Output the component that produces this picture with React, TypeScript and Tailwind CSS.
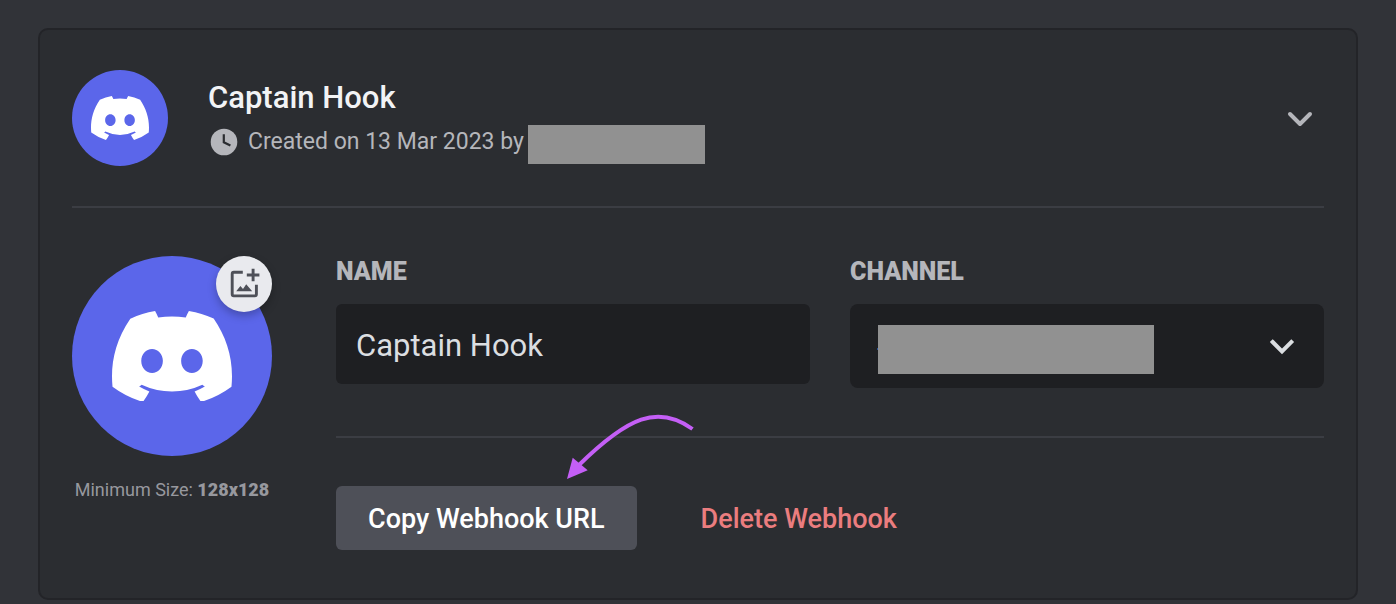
import { useState } from 'react';

function DiscordMark({ className }: { className: string }) {
  return (
    <svg viewBox="0 0 127.14 96.36" fill="currentColor" aria-hidden="true" className={className}>
      <path d="M107.7,8.07A105.15,105.15,0,0,0,81.47,0a72.06,72.06,0,0,0-3.36,6.83A97.68,97.68,0,0,0,49,6.83,72.37,72.37,0,0,0,45.64,0,105.89,105.89,0,0,0,19.39,8.09C2.79,32.65-1.71,56.6.54,80.21h0A105.73,105.73,0,0,0,32.71,96.36,77.7,77.7,0,0,0,39.6,85.25a68.42,68.42,0,0,1-10.85-5.18c.91-.66,1.8-1.34,2.66-2a75.57,75.57,0,0,0,64.32,0c.87.71,1.76,1.39,2.66,2a68.68,68.68,0,0,1-10.87,5.19,77,77,0,0,0,6.89,11.1A105.25,105.25,0,0,0,126.6,80.22h0C129.24,52.84,122.09,29.11,107.7,8.07ZM42.45,65.69C36.18,65.69,31,60,31,53s5-12.74,11.43-12.74S54,46,53.89,53,48.84,65.69,42.45,65.69Zm42.24,0C78.41,65.69,73.25,60,73.25,53s5-12.74,11.44-12.74S96.23,46,96.12,53,91.08,65.69,84.69,65.69Z" />
    </svg>
  );
}

function ClockIcon() {
  return (
    <svg viewBox="0 0 32 32" aria-hidden="true" className="size-8 shrink-0">
      <circle cx="16" cy="16" r="13.3" fill="#b5b6bb" />
      <path d="M15.8 8.3V16.3L22.4 19.6" fill="none" stroke="#2b2d31" strokeWidth="2.2" />
    </svg>
  );
}

function AddImageIcon() {
  return (
    <svg viewBox="0 0 56 56" aria-hidden="true" className="size-14">
      <path
        d="M26.8 16.3H17.8Q16.2 16.3 16.2 17.9V38.3Q16.2 39.9 17.8 39.9H38.8Q40.4 39.9 40.4 38.3V28.8"
        fill="none"
        stroke="#4e5058"
        strokeWidth="2.9"
      />
      <path d="M37.1 12.8V25.2M30.8 19H43.4" fill="none" stroke="#4e5058" strokeWidth="2.9" />
      <path d="M20.2 35.3L24.4 30L27 33L30.2 28.3L36.2 35.3Z" fill="#4e5058" />
    </svg>
  );
}

function Arrow() {
  return (
    <svg
      viewBox="0 0 130 68"
      aria-hidden="true"
      className="pointer-events-none absolute bottom-full left-[230px] mb-[5px] h-[68px] w-[130px]"
    >
      <path d="M126.5 16C92 -9 62 4 13 52" fill="none" stroke="#c45ff6" strokeWidth="4" />
      <path d="M1 66L6.7 44.7L21.7 57.3Z" fill="#c45ff6" />
    </svg>
  );
}

const labelStyle = 'mb-4 block text-[25px] leading-8 font-black text-[#b5b6bb] uppercase';

export default function App() {
  const [name, setName] = useState('Captain Hook');

  return (
    <main className="min-h-screen bg-[#313338] px-[38px] pt-7 pb-1 font-['Roboto',sans-serif]">
      <section className="rounded-[10px] border-2 border-[#232428] bg-[#2b2d31] px-8 pt-10 pb-12">
        <header className="flex items-center border-b-2 border-[#3b3d43] pb-10">
          <div className="flex size-24 shrink-0 items-center justify-center rounded-full bg-[#5b66ea] text-white">
            <DiscordMark className="w-[58px]" />
          </div>
          <div className="ml-10 flex flex-1 flex-col gap-2">
            <h2 className="text-[31px] leading-10 font-medium text-[#f2f3f5]">Captain Hook</h2>
            <div className="flex items-center gap-2 text-[23px] leading-8 text-[#b5b6bb]">
              <ClockIcon />
              <p className="flex">
                <span className="whitespace-pre">Created on 13 Mar 2023 by </span>
                <span className="relative">
                  a
                  <span className="absolute -top-px -left-0.5 h-[39px] w-[177px] bg-[#919191]" />
                </span>
              </p>
            </div>
          </div>
          <button type="button" aria-label="Collapse" className="text-[#b5b6bb]">
            <svg viewBox="0 0 48 48" aria-hidden="true" className="size-12">
              <path
                d="M14 20L24 30L34 20"
                fill="none"
                stroke="currentColor"
                strokeWidth="4"
                strokeLinecap="round"
                strokeLinejoin="round"
              />
            </svg>
          </button>
        </header>

        <div className="mt-12 flex items-start gap-16">
          <div className="w-[200px] shrink-0">
            <div className="relative flex h-[200px] items-center justify-center rounded-full bg-[#5b66ea] text-white">
              <DiscordMark className="w-[120px]" />
              <button
                type="button"
                aria-label="Upload image"
                className="absolute top-0 right-0 size-14 rounded-full bg-[#e9eaee] shadow-[0_4px_8px_rgba(0,0,0,0.25)]"
              >
                <AddImageIcon />
              </button>
            </div>
            <p className="mt-5 text-center text-[18px] leading-7 whitespace-nowrap text-[#97989e]">
              Minimum Size: <b className="font-black">128x128</b>
            </p>
          </div>

          <div className="flex-1">
            <div className="grid grid-cols-2 items-start gap-10 border-b-2 border-[#3b3d43] pb-12">
              <div>
                <label htmlFor="name" className={labelStyle}>
                  Name
                </label>
                <input
                  id="name"
                  value={name}
                  onChange={(e) => setName(e.target.value)}
                  className="block h-20 w-full rounded-md bg-[#1e1f22] px-5 pt-0.5 text-[31px] text-[#dbdee1] outline-none"
                />
              </div>
              <div>
                <label htmlFor="channel" className={labelStyle}>
                  Channel
                </label>
                <div className="relative">
                  <select
                    id="channel"
                    className="block h-[84px] w-full appearance-none rounded-lg bg-[#1e1f22] px-[26px] text-[31px] text-[#dbdee1] outline-none"
                  >
                    <option>#</option>
                  </select>
                  <span className="absolute top-[21px] left-7 h-[49px] w-[276px] bg-[#919191]" />
                  <svg
                    viewBox="0 0 48 48"
                    aria-hidden="true"
                    className="pointer-events-none absolute top-[18px] right-[18px] size-12 text-[#dbdee1]"
                  >
                    <path
                      d="M14.7 20L24 29.3L33.3 20"
                      fill="none"
                      stroke="currentColor"
                      strokeWidth="4"
                      strokeLinecap="square"
                    />
                  </svg>
                </div>
              </div>
            </div>

            <div className="relative mt-12 flex text-[27px] leading-8 font-medium">
              <button type="button" className="h-16 rounded-md bg-[#4e5058] px-8 pt-0.5 text-white">
                Copy Webhook URL
              </button>
              <button type="button" className="ml-8 h-16 px-8 pt-0.5 text-[#eb7d7f]">
                Delete Webhook
              </button>
              <Arrow />
            </div>
          </div>
        </div>
      </section>
    </main>
  );
}
